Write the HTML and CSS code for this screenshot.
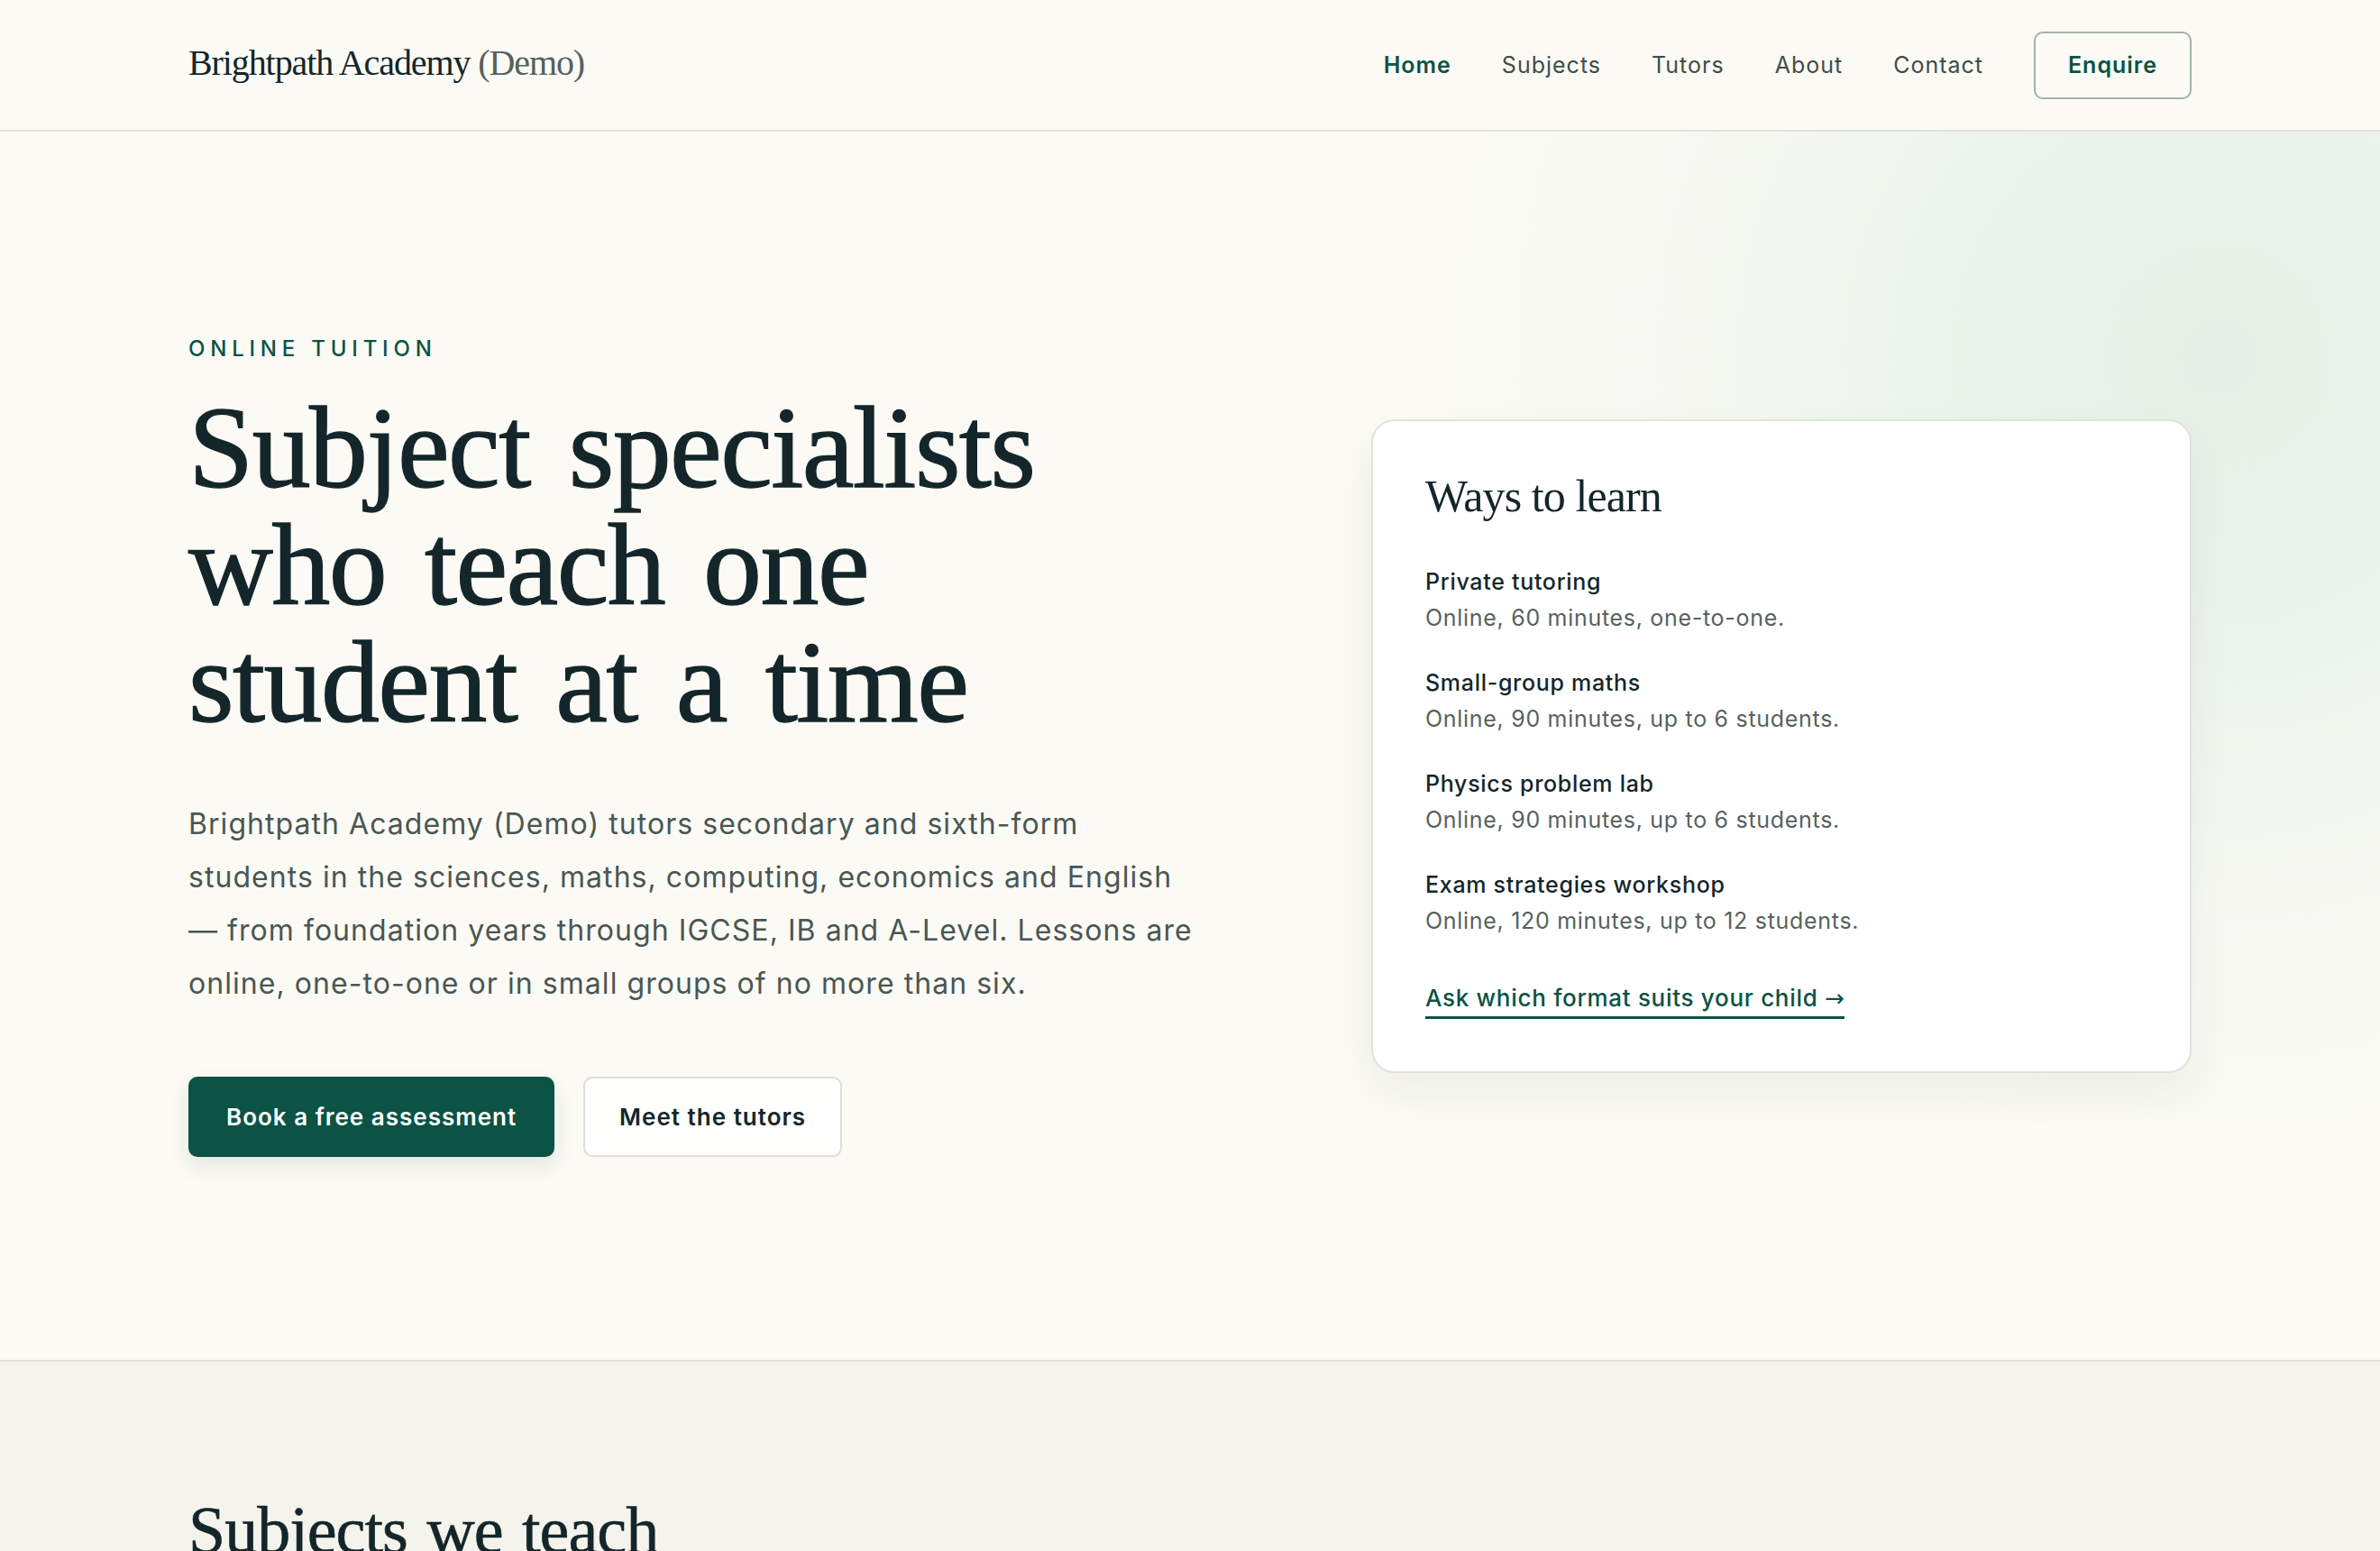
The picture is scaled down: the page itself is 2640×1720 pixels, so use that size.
FILE: index.html
```html
<!DOCTYPE html>
<html lang="en">
<head>
<meta charset="utf-8">
<title>Brightpath Academy (Demo)</title>
<link rel="stylesheet" href="styles.css">
</head>
<body>
<header class="site-header">
  <div class="container header-inner">
    <a class="logo" href="#">Brightpath Academy <span class="logo-demo">(Demo)</span></a>
    <nav class="nav">
      <a class="nav-link active" href="#">Home</a>
      <a class="nav-link" href="#">Subjects</a>
      <a class="nav-link" href="#">Tutors</a>
      <a class="nav-link" href="#">About</a>
      <a class="nav-link" href="#">Contact</a>
      <a class="btn-enquire" href="#">Enquire</a>
    </nav>
  </div>
</header>

<section class="hero">
  <div class="container hero-grid">
    <div class="hero-copy">
      <p class="eyebrow">ONLINE TUITION</p>
      <h1 class="hero-title">Subject specialists who teach one student at a time</h1>
      <p class="hero-lead">Brightpath Academy (Demo) tutors secondary and sixth-form students in the sciences, maths, computing, economics and English — from foundation years through IGCSE, IB and A-Level. Lessons are online, one-to-one or in small groups of no more than six.</p>
      <div class="hero-actions">
        <a class="btn btn-primary" href="#">Book a free assessment</a>
        <a class="btn btn-secondary" href="#">Meet the tutors</a>
      </div>
    </div>
    <aside class="card">
      <h2 class="card-title">Ways to learn</h2>
      <ul class="formats">
        <li class="format">
          <span class="format-name">Private tutoring</span>
          <span class="format-desc">Online, 60 minutes, one-to-one.</span>
        </li>
        <li class="format">
          <span class="format-name">Small-group maths</span>
          <span class="format-desc">Online, 90 minutes, up to 6 students.</span>
        </li>
        <li class="format">
          <span class="format-name">Physics problem lab</span>
          <span class="format-desc">Online, 90 minutes, up to 6 students.</span>
        </li>
        <li class="format">
          <span class="format-name">Exam strategies workshop</span>
          <span class="format-desc">Online, 120 minutes, up to 12 students.</span>
        </li>
      </ul>
      <a class="card-link" href="#">Ask which format suits your child <span class="arrow">→</span></a>
    </aside>
  </div>
</section>

<section class="subjects">
  <div class="container">
    <h2 class="section-title">Subjects we teach</h2>
  </div>
</section>
</body>
</html>
```
FILE: styles.css
```css
* { box-sizing: border-box; }
html, body { margin: 0; padding: 0; }
body {
  background: #fbfaf5;
  color: #14262a;
  font-family: Inter, "Noto Sans", sans-serif;
}
a { text-decoration: none; color: inherit; }

.container {
  width: 2222px;
  margin: 0 auto;
}

/* Header */
.site-header {
  background: #fbfaf5;
  border-bottom: 2px solid #e0e3dc;
}
.header-inner {
  height: 144px;
  display: flex;
  align-items: center;
  justify-content: space-between;
}
.logo {
  font-family: "Liberation Serif", serif;
  font-size: 40px;
  letter-spacing: -1.1px;
  color: #14262a;
  padding-bottom: 5px;
}
.logo-demo { color: #56605d; }
.nav {
  display: flex;
  align-items: center;
  gap: 56px;
}
.nav-link {
  font-size: 25px;
  color: #3f4c49;
  letter-spacing: 1px;
}
.nav-link.active {
  color: #0b5345;
  font-weight: 600;
}
.btn-enquire {
  display: inline-flex;
  align-items: center;
  justify-content: center;
  width: 175px;
  height: 75px;
  border: 2px solid #a5b2ab;
  border-radius: 10px;
  font-size: 25px;
  font-weight: 600;
  color: #0b5345;
  letter-spacing: 1px;
}

/* Hero */
.hero {
  background:
    radial-gradient(circle at 2460px 250px, rgba(228, 240, 231, 1) 0px, rgba(230, 241, 233, 0.75) 300px, rgba(236, 243, 237, 0.35) 560px, rgba(251, 250, 245, 0) 880px),
    #fbfaf5;
  padding: 226px 0 225px;
  border-bottom: 2px solid #e0e3dc;
}
.hero-grid {
  display: grid;
  grid-template-columns: 1fr 910px;
  gap: 134px;
  align-items: center;
}
.eyebrow {
  margin: 0 0 30px;
  font-size: 24px;
  line-height: 29px;
  letter-spacing: 5.8px;
  font-weight: 500;
  color: #0b5345;
}
.hero-title {
  margin: 0;
  max-width: 1000px;
  font-family: "Liberation Serif", serif;
  font-weight: 400;
  font-size: 130px;
  line-height: 130px;
  letter-spacing: -1.6px;
  word-spacing: 12px;
  color: #14262a;
  -webkit-text-stroke: 1.3px #14262a;
}
.hero-lead {
  margin: 63px 0 0;
  max-width: 1128px;
  font-size: 32px;
  line-height: 59px;
  color: #4a5653;
  letter-spacing: 1.05px;
}
.hero-actions {
  display: flex;
  gap: 32px;
  margin-top: 74px;
}
.btn {
  display: inline-flex;
  align-items: center;
  justify-content: center;
  height: 89px;
  padding: 0 40px;
  border-radius: 10px;
  font-size: 26px;
  font-weight: 600;
  letter-spacing: 1px;
}
.btn-primary {
  background: #0b5345;
  color: #ffffff;
  border: 2px solid #0b5345;
  box-shadow: 0 10px 24px rgba(11, 60, 50, 0.10);
}
.btn-secondary {
  background: #fefefc;
  color: #14262a;
  border: 2px solid #dcdfd8;
  padding: 0 38px;
}

/* Card */
.card {
  background: #ffffff;
  border: 2px solid #e1e4de;
  border-radius: 26px;
  padding: 53px 58px 58px;
  box-shadow: 0 22px 50px rgba(30, 50, 40, 0.06);
}
.card-title {
  margin: 0;
  font-family: "Liberation Serif", serif;
  font-weight: 400;
  font-size: 50px;
  line-height: 60px;
  letter-spacing: -0.9px;
  color: #14262a;
}
.formats {
  list-style: none;
  margin: 45px 0 0;
  padding: 0;
  display: flex;
  flex-direction: column;
  gap: 32px;
}
.format {
  display: flex;
  flex-direction: column;
}
.format-name {
  font-size: 25px;
  line-height: 40px;
  font-weight: 500;
  color: #14262a;
  letter-spacing: 0.7px;
}
.format-desc {
  font-size: 25px;
  line-height: 40px;
  color: #56625e;
  letter-spacing: 0.7px;
}
.card-link {
  display: inline-block;
  margin-top: 50px;
  font-size: 26px;
  line-height: 32px;
  padding-bottom: 4px;
  font-weight: 500;
  color: #0b5345;
  border-bottom: 3px solid #0b5345;
  letter-spacing: 0.7px;
}
.arrow {
  font-family: "DejaVu Sans", sans-serif;
  font-size: 26px;
  letter-spacing: 0;
}

/* Subjects */
.subjects {
  background: #f4f4ed;
  padding-top: 146px;
  min-height: 400px;
}
.section-title {
  margin: 0;
  font-family: "Liberation Serif", serif;
  font-weight: 400;
  font-size: 74px;
  line-height: 82px;
  letter-spacing: -1px;
  word-spacing: 4px;
  color: #14262a;
  -webkit-text-stroke: 0.6px #14262a;
}
```
